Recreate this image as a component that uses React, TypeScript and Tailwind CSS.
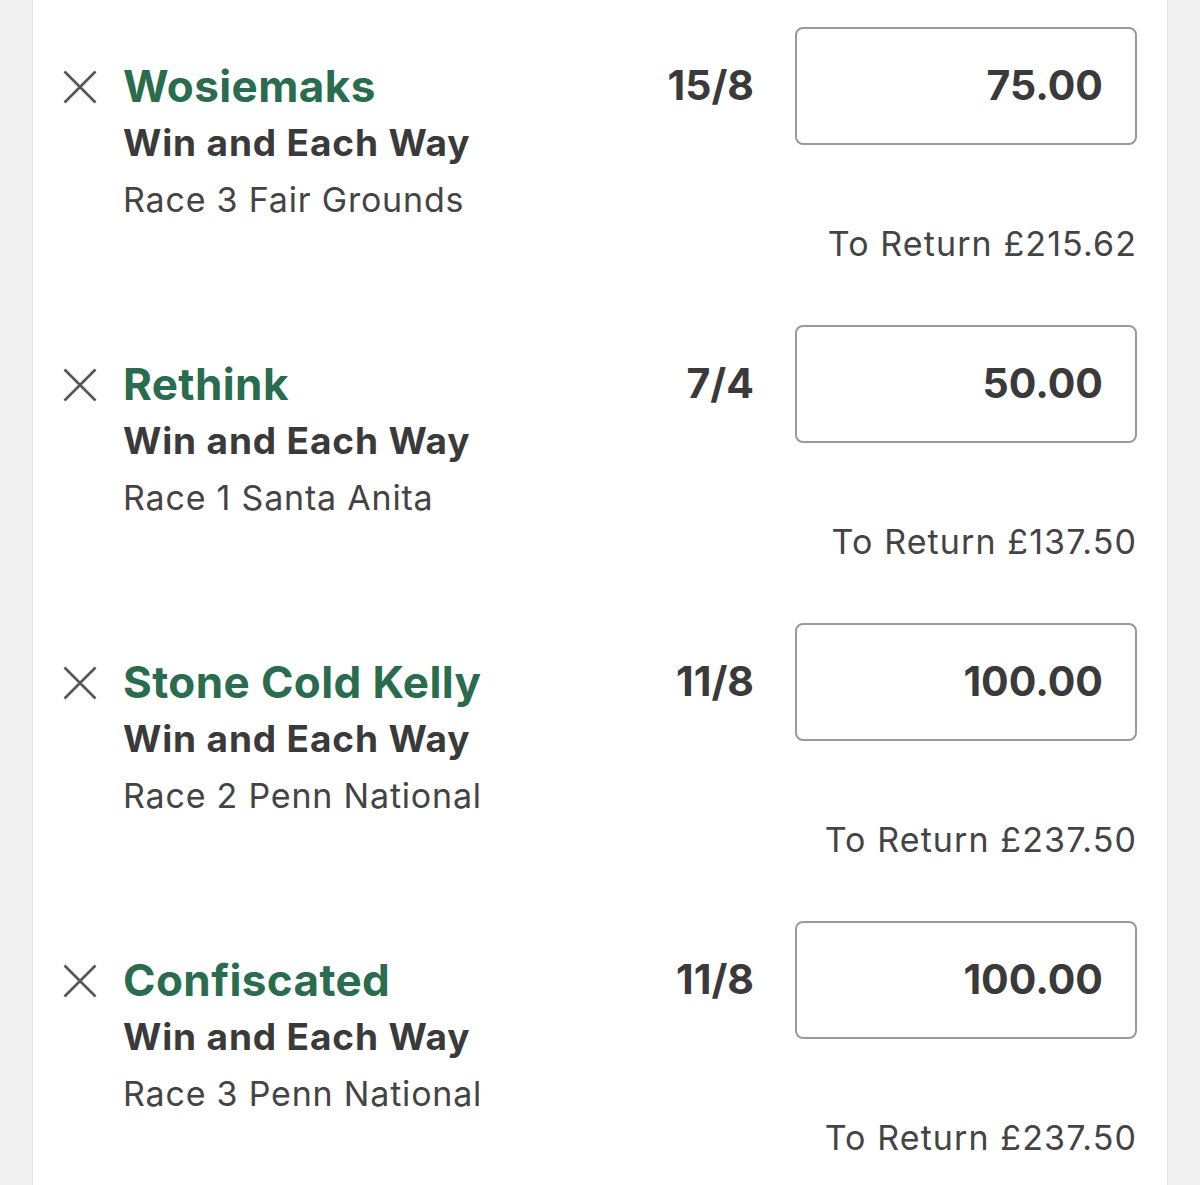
import React from 'react';

type Bet = { name: string; market: string; race: string; odds: string; stake: string; returns: string };

const bets: Bet[] = [
  { name: 'Wosiemaks', market: 'Win and Each Way', race: 'Race 3 Fair Grounds', odds: '15/8', stake: '75.00', returns: '£215.62' },
  { name: 'Rethink', market: 'Win and Each Way', race: 'Race 1 Santa Anita', odds: '7/4', stake: '50.00', returns: '£137.50' },
  { name: 'Stone Cold Kelly', market: 'Win and Each Way', race: 'Race 2 Penn National', odds: '11/8', stake: '100.00', returns: '£237.50' },
  { name: 'Confiscated', market: 'Win and Each Way', race: 'Race 3 Penn National', odds: '11/8', stake: '100.00', returns: '£237.50' },
];

function CloseIcon() {
  return (
    <svg width="34" height="34" viewBox="0 0 34 34" className="shrink-0 mt-[12px]">
      <path d="M1.5 1.5 L32.5 32.5 M32.5 1.5 L1.5 32.5" stroke="#555" strokeWidth="2.6" fill="none" />
    </svg>
  );
}

function BetRow({ bet }: { bet: Bet }) {
  return (
    <div className="flex items-start h-[298px]">
      {/* selection */}
      <div className="flex flex-1 items-start gap-[26px] pt-[58px]">
        <CloseIcon />
        <div className="flex flex-col">
          <div className="text-[44px] leading-[56px] font-bold tracking-[0.4px] text-[#2a6c4e]">{bet.name}</div>
          <div className="mt-[7px] text-[37px] leading-[44px] font-bold tracking-[0.85px] text-[#3a3a3a]">{bet.market}</div>
          <div className="mt-[15px] text-[34px] leading-[40px] tracking-[0.8px] text-[#444]">{bet.race}</div>
        </div>
      </div>

      {/* odds + stake */}
      <div className="flex flex-col items-end pt-[27px]">
        <div className="flex items-center gap-[41px]">
          <div className="text-[41px] font-bold text-[#3a3a3a]">{bet.odds}</div>
          <div className="w-[342px] h-[118px] rounded-[8px] border-2 border-[#9a9a9a] flex items-center justify-end pr-[32px]">
            <span className="text-[41px] font-bold text-[#3a3a3a]">{bet.stake}</span>
          </div>
        </div>
        <div className="mt-[79px] text-[34px] leading-[40px] tracking-[1.1px] text-[#444]">To Return {bet.returns}</div>
      </div>
    </div>
  );
}

export default function App() {
  return (
    <div className="h-[1185px] overflow-hidden bg-[#f0f0f0] px-[32px]" style={{ fontFamily: 'Inter, "Noto Sans", sans-serif' }}>
      <div className="h-full bg-white border-x border-[#e3e3e3] pl-[30px] pr-[30px]">
        {bets.map((b) => (
          <BetRow key={b.name} bet={b} />
        ))}
      </div>
    </div>
  );
}
